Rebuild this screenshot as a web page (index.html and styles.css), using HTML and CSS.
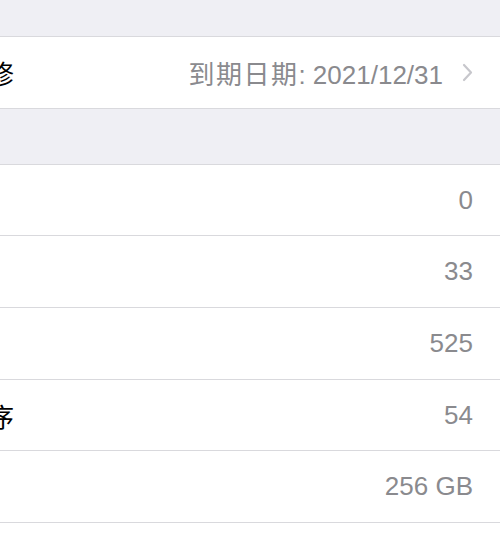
FILE: index.html
```html
<!DOCTYPE html>
<html lang="zh-CN">
<head>
    <meta charset="UTF-8">
    <meta name="viewport" content="width=device-width, initial-scale=1.0">
    <title>关于本机</title>
    <link rel="stylesheet" href="styles.css">
</head>
<body>

<div class="page">
    <div class="gap gap-top"></div>

    <!-- Warranty -->
    <div class="group">
        <div class="cell">
            <span class="label">有限保修</span>
            <span class="value"><span class="value-cjk">到期日期</span>: 2021/12/31</span>
            <svg class="chevron" width="11" height="19" viewBox="0 0 11 19">
                <path d="M2 2 L9 9.5 L2 17" fill="none" stroke="#c7c7cc" stroke-width="2.2" stroke-linecap="round" stroke-linejoin="round"/>
            </svg>
        </div>
    </div>

    <div class="gap gap-mid"></div>

    <!-- Media counts -->
    <div class="group">
        <div class="cell">
            <span class="label">歌曲</span>
            <span class="value">0</span>
        </div>
        <div class="cell">
            <span class="label">视频</span>
            <span class="value">33</span>
        </div>
        <div class="cell">
            <span class="label">照片</span>
            <span class="value">525</span>
        </div>
        <div class="cell">
            <span class="label">应用程序</span>
            <span class="value">54</span>
        </div>
        <div class="cell">
            <span class="label">总容量</span>
            <span class="value">256 GB</span>
        </div>
        <div class="cell">
            <span class="label">可用容量</span>
            <span class="value"></span>
        </div>
    </div>
</div>

</body>
</html>
```

FILE: styles.css
```css
/* Page base */
body {
    margin: 0;
    background-color: #efeff4;
    font-family: 'Liberation Sans', 'Noto Sans CJK SC', sans-serif;
    overflow: hidden;
}

/* The list is wider than the window; labels start off-screen on the left */
.page {
    margin-left: -90px;
}

.gap-top {
    height: 36px;
}

.gap-mid {
    height: 55px;
}

/* Grouped table section */
.group {
    background-color: #fff;
    border-top: 1px solid #d9d9dd;
}

.cell {
    display: flex;
    align-items: center;
    height: 70.7px;
    padding-right: 27px;
    border-bottom: 1px solid #d9d9dd;
    font-size: 26px;
}

.label {
    color: #000;
    font-family: 'Noto Sans CJK SC', sans-serif;
    white-space: nowrap;
}

.value {
    margin-left: auto;
    color: #8a8a8e;
    white-space: nowrap;
}

.value-cjk {
    letter-spacing: 1.5px;
}

.chevron {
    margin-left: 19px;
    flex-shrink: 0;
}
```
